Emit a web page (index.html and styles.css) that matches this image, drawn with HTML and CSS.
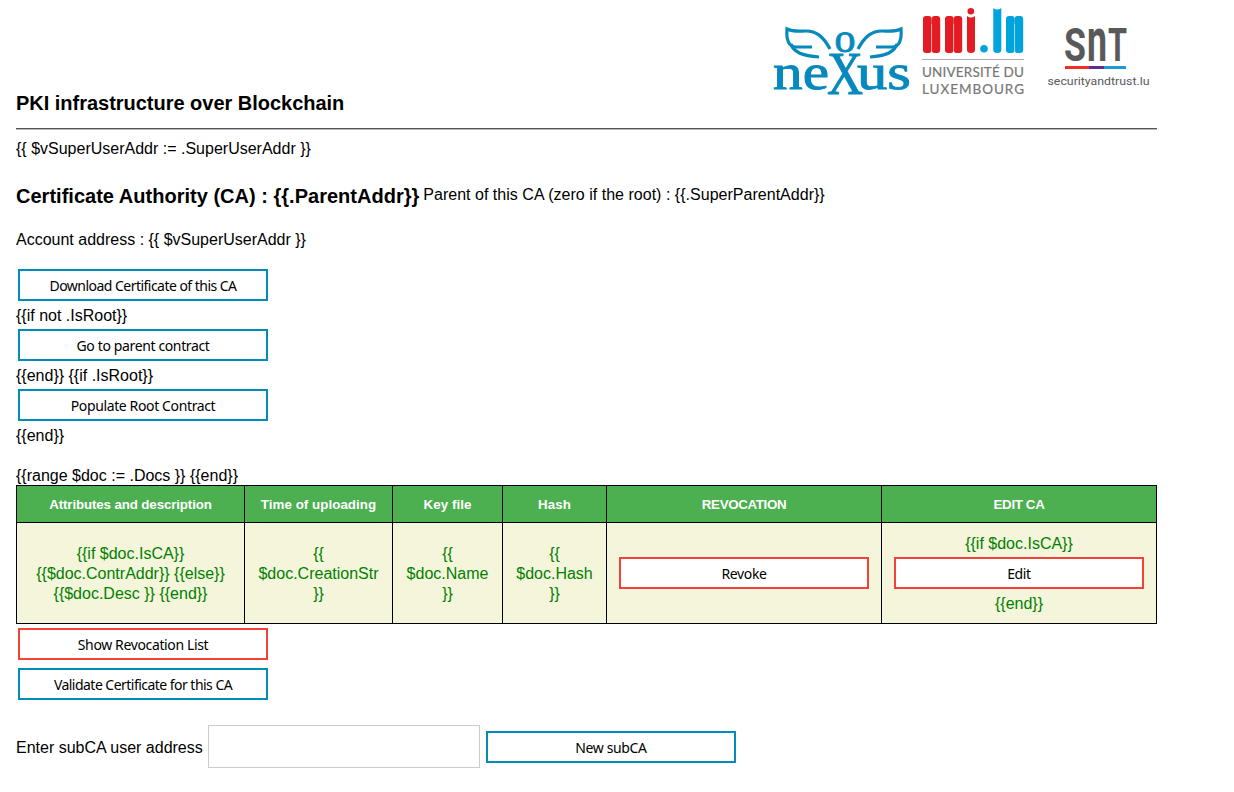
FILE: index.html
```html
<!DOCTYPE html>
<html lang="en">
<head>
<meta charset="utf-8">
<title>PKI infrastructure over Blockchain</title>
<link rel="stylesheet" href="styles.css">
</head>
<body>
<main class="page">
  <header class="header">
    <h2 class="title">PKI infrastructure over Blockchain</h2>
    <div class="logos">
      <svg class="logo" width="145" height="105" viewBox="0 0 145 105" role="img" aria-label="nexus">
        <g transform="translate(-1)" fill="none" stroke="#0689bd" stroke-width="3.2">
          <path d="M65 49 C58 36 51 31 41 31 C34 31 28 32 22 29 C21 41 24 46 30 47 L47 47"/>
          <path d="M26 44 C28 51 36 56 54 57"/>
          <path d="M93 49 C100 36 107 31 117 31 C124 31 130 32 136 29 C137 41 134 46 128 47 L111 47"/>
          <path d="M132 44 C130 51 122 56 105 57"/>
        </g>
        <g class="nexus-text">
          <text x="68.500" y="51.500" font-size="43" textLength="21" lengthAdjust="spacingAndGlyphs">o</text>
          <text x="7" y="89" font-size="50" textLength="56" lengthAdjust="spacingAndGlyphs">ne</text>
          <text x="61" y="94" font-size="61" textLength="36" lengthAdjust="spacingAndGlyphs">X</text>
          <text x="91" y="89" font-size="50" textLength="54" lengthAdjust="spacingAndGlyphs">us</text>
        </g>
      </svg>
      <svg class="logo" width="135" height="105" viewBox="0 0 135 105" role="img" aria-label="uni.lu">
        <g fill="#e31b23">
          <rect x="12" y="16" width="8.600" height="37" rx="3"/><rect x="20.600" y="16" width="8.600" height="37" rx="3"/>
          <rect x="34" y="16" width="8.600" height="37" rx="3"/><rect x="42.600" y="16" width="8.600" height="37" rx="3"/>
          <path d="M56 16q4 3 8 0V50q0 3-4 3t-4-3z"/><circle cx="59.800" cy="11.300" r="3.300"/>
        </g>
        <g fill="#00a3dc">
          <circle cx="73" cy="48.700" r="3.800"/>
          <path d="M82.300 8q4 3 8 0V50q0 3-4 3t-4-3z"/>
          <rect x="95" y="16" width="8.600" height="37" rx="3"/><rect x="103.600" y="16" width="8.600" height="37" rx="3"/>
        </g>
        <path d="M20.600 24V53M42.600 24V53M103.600 24V53" stroke="#fff" stroke-width=".5"/>
        <path d="M11 59.500H113" stroke="#aaa"/>
        <g class="uni-text"><text x="11" y="77" textLength="102">UNIVERSITÉ DU</text><text x="11" y="93.500" textLength="102">LUXEMBOURG</text></g>
      </svg>
      <svg class="logo" width="112" height="105" viewBox="0 0 112 105" role="img" aria-label="SnT securityandtrust.lu">
        <g class="snt-text">
          <text x="18" y="61" font-size="47" textLength="22" lengthAdjust="spacingAndGlyphs">S</text>
          <text x="41" y="61" font-size="61" textLength="20" lengthAdjust="spacingAndGlyphs">n</text>
          <text x="62" y="61" font-size="47" textLength="19" lengthAdjust="spacingAndGlyphs">T</text>
        </g>
        <path d="M19 66h24v3H19z" fill="#ee3124"/><path d="M43 66h15v3H43z" fill="#5c2d91"/><path d="M58 66h22v3H58z" fill="#1b9ad6"/>
        <text class="snt-url" x="1.500" y="85" textLength="102" lengthAdjust="spacingAndGlyphs">securityandtrust.lu</text>
      </svg>
    </div>
  </header>
  <p class="line intro">{{ $vSuperUserAddr := .SuperUserAddr }}</p>
  <div class="authority"><h2 class="title">Certificate Authority (CA) : {{.ParentAddr}}</h2><span class="parent">Parent of this CA (zero if the root) : {{.SuperParentAddr}}</span></div>
  <p class="line account">Account address : {{ $vSuperUserAddr }}</p>
  <button class="btn tight">Download Certificate of this CA</button>
  <p class="line">{{if not .IsRoot}}</p>
  <button class="btn">Go to parent contract</button>
  <p class="line">{{end}} {{if .IsRoot}}</p>
  <button class="btn">Populate Root Contract</button>
  <p class="line">{{end}}</p>
  <p class="line range">{{range $doc := .Docs }} {{end}}</p>
  <table class="docs">
    <colgroup><col class="c1"><col class="c2"><col class="c3"><col class="c4"><col class="c5"><col class="c5"></colgroup>
    <thead><tr><th class="first">Attributes and description</th><th>Time of uploading</th><th>Key file</th><th>Hash</th><th class="caps">REVOCATION</th><th class="caps">EDIT CA</th></tr></thead>
    <tbody><tr>
      <td>{{if $doc.IsCA}}<br>{{$doc.ContrAddr}} {{else}}<br>{{$doc.Desc }} {{end}}</td>
      <td>{{<br>$doc.CreationStr<br>}}</td>
      <td>{{<br>$doc.Name<br>}}</td>
      <td>{{<br>$doc.Hash<br>}}</td>
      <td class="action"><button class="btn danger">Revoke</button></td>
      <td>{{if $doc.IsCA}}<button class="btn danger">Edit</button>{{end}}</td>
    </tr></tbody>
  </table>
  <button class="btn danger">Show Revocation List</button>
  <button class="btn validate tight">Validate Certificate for this CA</button>
  <form class="sub-form">
    <label for="addr">Enter subCA user address</label>
    <input id="addr" class="field" type="text">
    <button class="btn" type="button">New subCA</button>
  </form>
</main>
</body>
</html>
```
FILE: styles.css
```css
* { box-sizing: border-box; }
body {
  margin: 0;
  background: #fff;
  color: #000;
  font: 16px/20px "Liberation Sans", Arial, sans-serif;
}
.page {
  width: 1157px;
  padding-left: 16px;
  display: flex;
  flex-direction: column;
  align-items: flex-start;
}
.header {
  width: 1141px;
  height: 130px;
  display: flex;
  justify-content: space-between;
  align-items: flex-start;
  border-bottom: 1px solid #bbb;
  box-shadow: inset 0 -1px #555;
}
.title { margin: 0; font-size: 20px; line-height: 20px; white-space: nowrap; }
.header .title { padding-top: 93px; letter-spacing: -.02px; }
.logos { display: flex; margin-right: -1px; }
.logo { display: block; overflow: visible; }
.nexus-text { font-family: "Liberation Serif", serif; fill: #0689bd; stroke: #0689bd; stroke-width: .9px; }
.uni-text { font: 13.5px Lato, sans-serif; fill: #777; stroke: #777; stroke-width: .2px; }
.snt-text { font-family: Roboto, sans-serif; font-weight: 700; fill: #58595b; }
.snt-url { font: 11.5px Roboto, sans-serif; fill: #58595b; }
.line { margin: 0; height: 20px; padding-top: 1px; white-space: nowrap; }
.intro { margin-top: 8px; }
.authority { display: flex; gap: 4px; margin-top: 28px; height: 20px; white-space: nowrap; }
.authority .title { letter-spacing: .015px; }
.parent { line-height: 18px; letter-spacing: .02px; }
.account { margin: 23px 0 18px; }
.range { margin-top: 20px; }
.btn {
  display: block;
  width: 250px;
  height: 32px;
  margin: 2px 2px 4px;
  padding: 1px 0 0;
  border: 2px solid #008cba;
  background: #fff;
  color: #000;
  font: 14px/20px "Noto Sans", sans-serif;
  letter-spacing: -.37px;
  white-space: nowrap;
}
.tight { letter-spacing: -.53px; }
.line + .btn { margin-top: 4px; }
.account + .btn { margin-top: 2px; }
.danger { border-color: #f44336; }
.docs {
  width: 1141px;
  table-layout: fixed;
  border-collapse: separate;
  border-spacing: 0;
  border-left: 1px solid #000;
  border-top: 1px solid #000;
  text-align: center;
}
.c1 { width: 228px; } .c2 { width: 148px; } .c3 { width: 110px; } .c4 { width: 104px; } .c5 { width: 275px; }
.docs th, .docs td { padding: 2px 0 0; border-right: 1px solid #000; border-bottom: 1px solid #000; white-space: nowrap; }
.docs th { height: 37px; background: #4caf50; color: #fff; font-size: 13.33px; letter-spacing: .05px; }
.docs th.first { letter-spacing: -.13px; }
.docs th.caps { letter-spacing: -.35px; }
.docs td { height: 101px; background: #f5f5dc; color: green; }
.docs td.action { padding: 0; }
.docs .btn { margin: 3px auto 5px; }
.docs .action .btn { margin: 4px auto; }
.docs + .btn { margin-top: 4px; }
.validate { margin-top: 4px; }
.sub-form { display: flex; align-items: center; margin-top: 21px; white-space: nowrap; }
.sub-form label { width: 192px; padding-top: 2px; }
.field { width: 272px; height: 43px; border: 1px solid #ccc; padding: 12px; }
.sub-form .btn { margin: 1px 0 0 6px; }
```
